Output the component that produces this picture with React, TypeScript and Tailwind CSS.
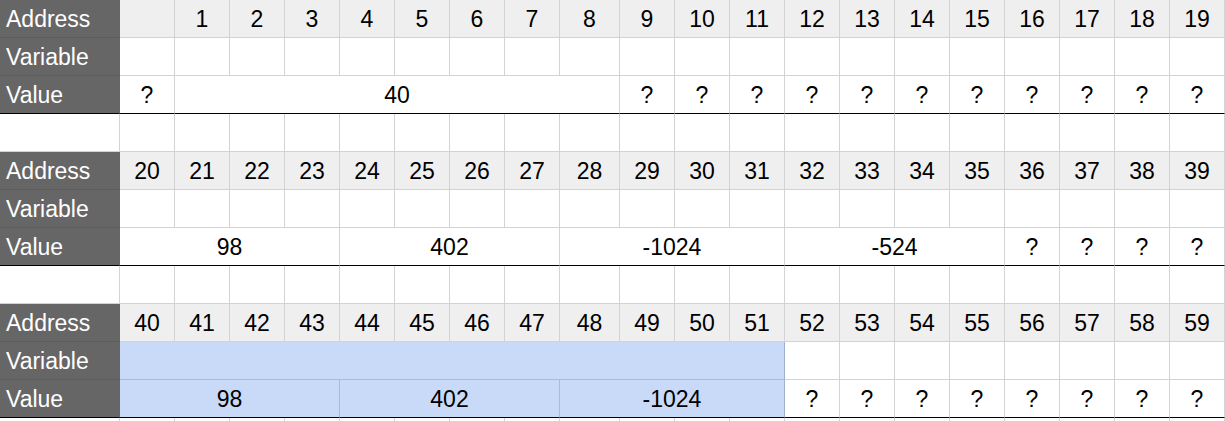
import React from "react";

type Cell = { span: number; text: string; blue?: boolean; blueEnd?: boolean };

const COLS = "grid-cols-[120px_repeat(8,55px)_60px_repeat(11,55px)]";

const q = (n: number): Cell[] => Array.from({ length: n }, () => ({ span: 1, text: "?" }));
const empty = (n: number): Cell[] => Array.from({ length: n }, () => ({ span: 1, text: "" }));

type Block = { start: number; variable: Cell[]; value: Cell[]; blankFirst?: boolean };

const blocks: Block[] = [
  {
    start: 0,
    blankFirst: true,
    variable: empty(20),
    value: [{ span: 1, text: "?" }, { span: 8, text: "40" }, ...q(11)],
  },
  {
    start: 20,
    variable: empty(20),
    value: [
      { span: 4, text: "98" },
      { span: 4, text: "402" },
      { span: 4, text: "-1024" },
      { span: 4, text: "-524" },
      ...q(4),
    ],
  },
  {
    start: 40,
    variable: [{ span: 12, text: "", blue: true, blueEnd: true }, ...empty(8)],
    value: [
      { span: 4, text: "98", blue: true },
      { span: 4, text: "402", blue: true },
      { span: 4, text: "-1024", blue: true, blueEnd: true },
      ...q(8),
    ],
  },
];

const spanClass: Record<number, string> = {
  1: "col-span-1",
  4: "col-span-4",
  8: "col-span-8",
  12: "col-span-12",
};

function Label({ text, last }: { text: string; last?: boolean }) {
  return (
    <div
      className={`h-[38px] bg-[#666666] text-white text-[23px] pl-[6px] pt-[2px] flex items-center border-r border-r-[#666666] border-b ${
        last ? "border-b-black" : "border-b-[#5c5c5c]"
      }`}
    >
      {text}
    </div>
  );
}

function DataCell({ cell, last, header }: { cell: Cell; last?: boolean; header?: boolean }) {
  const bg = cell.blue ? "bg-[#c9daf8]" : header ? "bg-[#efefef]" : "bg-white";
  const br = cell.blue
    ? cell.blueEnd
      ? "border-r-[#9eafcf]"
      : "border-r-[#aab9d5]"
    : "border-r-[#d3d3d3]";
  const bb = last ? "border-b-black" : cell.blue ? "border-b-[#aab9d5]" : "border-b-[#d3d3d3]";
  return (
    <div
      className={`${spanClass[cell.span]} h-[38px] ${bg} border-r border-b ${br} ${bb} flex items-center justify-center pt-[2px] text-[23px] text-black`}
    >
      {cell.text}
    </div>
  );
}

function Spacer() {
  return (
    <>
      <div className="h-[38px] bg-white border-r border-b border-r-[#d3d3d3] border-b-[#d3d3d3]" />
      {Array.from({ length: 20 }, (_, i) => (
        <div key={i} className="h-[38px] bg-white border-r border-b border-r-[#d3d3d3] border-b-[#d3d3d3]" />
      ))}
    </>
  );
}

export default function App() {
  return (
    <div
      className="w-[1225px] h-[421px] overflow-hidden bg-white"
      style={{ fontFamily: "'Liberation Sans', Arial, sans-serif" }}
    >
      <div className={`grid ${COLS}`}>
        {blocks.map((b, bi) => (
          <React.Fragment key={bi}>
            <Label text="Address" />
            {Array.from({ length: 20 }, (_, i) => (
              <DataCell
                key={`h${i}`}
                header
                cell={{ span: 1, text: b.blankFirst && i === 0 ? "" : String(b.start + i) }}
              />
            ))}
            <Label text="Variable" />
            {b.variable.map((c, i) => (
              <DataCell key={`v${i}`} cell={c} />
            ))}
            <Label text="Value" last />
            {b.value.map((c, i) => (
              <DataCell key={`x${i}`} cell={c} last />
            ))}
            <Spacer />
          </React.Fragment>
        ))}
      </div>
    </div>
  );
}
